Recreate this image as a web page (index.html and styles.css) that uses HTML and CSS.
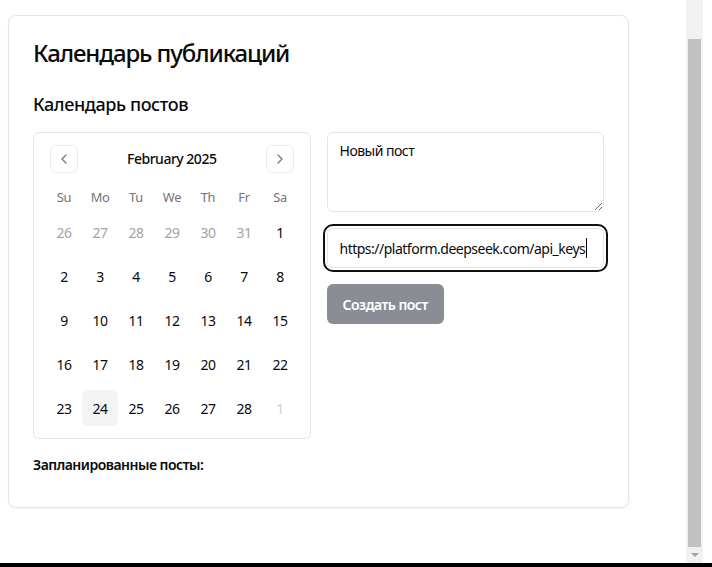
FILE: index.html
```html
<!DOCTYPE html>
<html lang="ru">
<head>
<meta charset="utf-8">
<title>Календарь публикаций</title>
<link rel="stylesheet" href="styles.css">
</head>
<body>
<div class="screen">
  <div class="viewport">
    <main class="content">
      <section class="card">
        <h1 class="card-title">Календарь публикаций</h1>
        <h2 class="section-title">Календарь постов</h2>
        <div class="grid">
          <div class="calendar">
            <div class="caption">
              <button class="nav-btn" aria-label="Previous month">
                <svg width="16" height="16" viewBox="0 0 24 24" fill="none" stroke="currentColor" stroke-width="2" stroke-linecap="round" stroke-linejoin="round"><path d="M15 18l-6-6 6-6"/></svg>
              </button>
              <div class="caption-label">February 2025</div>
              <button class="nav-btn" aria-label="Next month">
                <svg width="16" height="16" viewBox="0 0 24 24" fill="none" stroke="currentColor" stroke-width="2" stroke-linecap="round" stroke-linejoin="round"><path d="M9 18l6-6-6-6"/></svg>
              </button>
            </div>
            <div class="head-row">
              <div>Su</div><div>Mo</div><div>Tu</div><div>We</div><div>Th</div><div>Fr</div><div>Sa</div>
            </div>
            <div class="week">
              <div class="day outside">26</div><div class="day outside">27</div><div class="day outside">28</div><div class="day outside">29</div><div class="day outside">30</div><div class="day outside">31</div><div class="day">1</div>
            </div>
            <div class="week">
              <div class="day">2</div><div class="day">3</div><div class="day">4</div><div class="day">5</div><div class="day">6</div><div class="day">7</div><div class="day">8</div>
            </div>
            <div class="week">
              <div class="day">9</div><div class="day">10</div><div class="day">11</div><div class="day">12</div><div class="day">13</div><div class="day">14</div><div class="day">15</div>
            </div>
            <div class="week">
              <div class="day">16</div><div class="day">17</div><div class="day">18</div><div class="day">19</div><div class="day">20</div><div class="day">21</div><div class="day">22</div>
            </div>
            <div class="week">
              <div class="day">23</div><div class="day today">24</div><div class="day">25</div><div class="day">26</div><div class="day">27</div><div class="day">28</div><div class="day faded">1</div>
            </div>
          </div>
          <div class="form">
            <textarea class="textarea">Новый пост</textarea>
            <div class="field focused"><span>https://platform.deepseek.com/api_keys</span><span class="caret"></span></div>
            <div><button class="btn">Создать пост</button></div>
          </div>
        </div>
        <h3 class="scheduled">Запланированные посты:</h3>
      </section>
    </main>
    <div class="scrollbar">
      <div class="track"><div class="thumb"></div></div>
      <div class="arrow"></div>
    </div>
    <div class="edge"></div>
  </div>
  <div class="bottom-band"></div>
</div>
</body>
</html>
```
FILE: styles.css
```css
* { box-sizing: border-box; }
html, body { margin: 0; padding: 0; background: #fff; }
body {
  font-family: "Noto Sans", "Open Sans", sans-serif;
  color: #0a0a0a;
  overflow: hidden;
  letter-spacing: -0.5px;
}
.screen { display: flex; flex-direction: column; width: 712px; height: 567px; }
.viewport { display: flex; height: 563px; }
.content { width: 686px; padding: 15px 0 0 8px; }
.card {
  width: 621px;
  border: 1px solid #e5e5e5;
  border-radius: 8px;
  box-shadow: 0 1px 2px rgba(0,0,0,0.05);
  padding: 24px 24px 32px;
  background: #fff;
}
.card-title {
  margin: 0;
  font-size: 24px;
  line-height: 26px;
  font-weight: 500;
  letter-spacing: -1.1px;
}
.section-title {
  margin: 24px 0 14px;
  font-size: 18px;
  line-height: 28px;
  font-weight: 500;
  letter-spacing: -0.4px;
}
.grid { display: grid; grid-template-columns: minmax(0, 1fr) minmax(0, 1fr); gap: 16px; }
.calendar {
  border: 1px solid #e5e5e5;
  border-radius: 6px;
  padding: 12px;
}
.caption {
  display: flex;
  align-items: center;
  justify-content: space-between;
  padding: 0 4px;
  height: 28px;
  box-sizing: content-box;
}
.nav-btn {
  width: 28px; height: 28px;
  border: 1px solid #ececec;
  border-radius: 6px;
  background: #fff;
  color: #777;
  display: flex; align-items: center; justify-content: center;
  padding: 0;
}
.caption-label { font-size: 14px; font-weight: 500; line-height: 20px; }
.head-row {
  display: grid;
  grid-template-columns: repeat(7, 36px);
  margin-top: 15px;
  font-size: 12.8px;
  line-height: 18px;
  color: #737373;
  text-align: center;
  letter-spacing: -0.3px;
}
.week {
  display: grid;
  grid-template-columns: repeat(7, 36px);
  margin-top: 8px;
}
.day {
  height: 36px;
  display: flex; align-items: center; justify-content: center;
  font-size: 14px;
  border-radius: 6px;
}
.day.outside { color: #a3a3a3; }
.day.faded { color: #d0d0d0; }
.day.today { background: #f4f4f4; }
.form { display: flex; flex-direction: column; gap: 16px; }
.textarea {
  display: block;
  width: 100%;
  height: 80px;
  border: 1px solid #e5e5e5;
  border-radius: 6px;
  padding: 8px 12px;
  font: inherit;
  font-size: 14px;
  line-height: 20px;
  letter-spacing: -0.5px;
  color: #0a0a0a;
  resize: vertical;
}
.field {
  height: 40px;
  border: 1px solid #e5e5e5;
  border-radius: 6px;
  padding: 0 12px;
  display: flex; align-items: center;
  font-size: 14px;
  outline: 2px solid #101010;
  outline-offset: 2px;
}
.caret { display: inline-block; width: 1px; height: 20px; background: #000; margin-left: 1px; }
.btn {
  height: 40px;
  padding: 0 16px;
  border: 0;
  border-radius: 6px;
  background: #8a8d94;
  color: #fff;
  font: inherit;
  font-size: 14px;
  font-weight: 600;
  letter-spacing: -0.5px;
}
.scheduled {
  margin: 16px 0 0;
  font-size: 14px;
  line-height: 20px;
  font-weight: 600;
}
.scrollbar { width: 17px; background: #f1f1f1; display: flex; flex-direction: column; }
.track { flex: 1; padding: 39px 2px 0; }
.thumb { height: 508px; background: #c1c1c1; }
.arrow {
  height: 16px;
  display: flex; justify-content: center; align-items: center;
}
.arrow::before {
  content: "";
  border-left: 4px solid transparent;
  border-right: 4px solid transparent;
  border-top: 4px solid #a3a3a3;
}
.edge { flex: 1; background: #fff; }
.bottom-band { height: 4px; background: #000; }
```
